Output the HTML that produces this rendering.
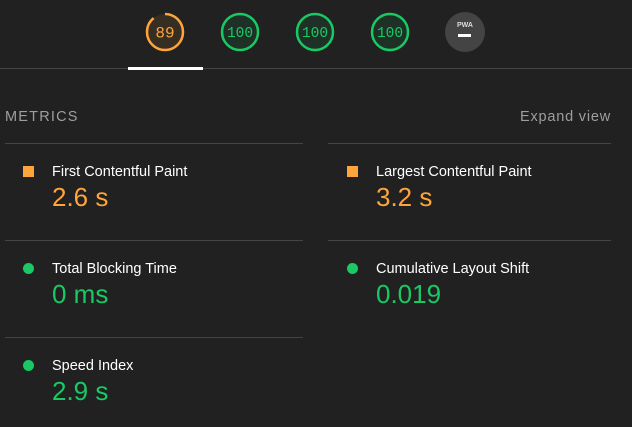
<!DOCTYPE html>
<html><head><style>
body{margin:0;width:632px;height:427px;background:#212121;font-family:"Liberation Sans",sans-serif;position:relative;overflow:hidden}
.g{position:absolute;top:12px}
.sep{position:absolute;left:0;top:68px;width:632px;height:1px;background:#444}
.tab{position:absolute;left:128px;top:67px;width:75px;height:3px;background:#fff}
.hdr{position:absolute;top:109px;font-size:14.5px;color:#9e9e9e}
.line{position:absolute;height:1px;background:#444}
.m{position:absolute}
.ic{position:absolute;left:0;top:2px;width:11px;height:11px}
.t{position:absolute;left:29px;top:0;font-size:14.5px;color:#fff;white-space:nowrap}
.v{position:absolute;left:29px;top:18px;font-size:26px;white-space:nowrap}
.o{color:#ffa43a}.gr{color:#18c964}
</style></head><body>
<svg class="g" style="left:145px" width="40" height="40" viewBox="0 0 40 40"><circle cx="20" cy="20" r="18" fill="#ffa43a" fill-opacity=".1"/><circle cx="20" cy="20" r="18" fill="none" stroke="#ffa43a" stroke-width="2.5" stroke-dasharray="100.6 113.1" transform="rotate(-90 20 20)"/><text x="20" y="25.5" text-anchor="middle" font-family="Liberation Mono" font-size="16" fill="#ffa43a">89</text></svg>
<svg class="g" style="left:220px" width="40" height="40" viewBox="0 0 40 40"><circle cx="20" cy="20" r="18" fill="#18c964" fill-opacity=".1" stroke="#18c964" stroke-width="2.5"/><text x="20" y="25" text-anchor="middle" font-family="Liberation Mono" font-size="14.5" fill="#18c964">100</text></svg>
<svg class="g" style="left:295px" width="40" height="40" viewBox="0 0 40 40"><circle cx="20" cy="20" r="18" fill="#18c964" fill-opacity=".1" stroke="#18c964" stroke-width="2.5"/><text x="20" y="25" text-anchor="middle" font-family="Liberation Mono" font-size="14.5" fill="#18c964">100</text></svg>
<svg class="g" style="left:370px" width="40" height="40" viewBox="0 0 40 40"><circle cx="20" cy="20" r="18" fill="#18c964" fill-opacity=".1" stroke="#18c964" stroke-width="2.5"/><text x="20" y="25" text-anchor="middle" font-family="Liberation Mono" font-size="14.5" fill="#18c964">100</text></svg>
<svg class="g" style="left:445px" width="40" height="40" viewBox="0 0 40 40"><circle cx="20" cy="20" r="20" fill="#444"/><text x="20" y="15" text-anchor="middle" font-size="7" font-weight="bold" fill="#ddd">PWA</text><rect x="13" y="22" width="13" height="3" fill="#fff"/></svg>
<div class="sep"></div><div class="tab"></div>
<div class="hdr" style="left:5px;letter-spacing:1.2px">METRICS</div>
<div class="hdr" style="right:21px;letter-spacing:.8px">Expand view</div>
<div class="line" style="left:5px;top:143px;width:298px"></div>
<div class="line" style="left:328px;top:143px;width:283px"></div>
<div class="line" style="left:5px;top:240px;width:298px"></div>
<div class="line" style="left:328px;top:240px;width:283px"></div>
<div class="line" style="left:5px;top:337px;width:298px"></div>
<div class="m" style="left:23px;top:164px"><div class="ic" style="background:#ffa43a"></div><div class="t">First Contentful Paint</div><div class="v o">2.6 s</div></div>
<div class="m" style="left:347px;top:164px"><div class="ic" style="background:#ffa43a"></div><div class="t">Largest Contentful Paint</div><div class="v o">3.2 s</div></div>
<div class="m" style="left:23px;top:261px"><div class="ic" style="background:#18c964;border-radius:50%"></div><div class="t">Total Blocking Time</div><div class="v gr">0 ms</div></div>
<div class="m" style="left:347px;top:261px"><div class="ic" style="background:#18c964;border-radius:50%"></div><div class="t">Cumulative Layout Shift</div><div class="v gr">0.019</div></div>
<div class="m" style="left:23px;top:358px"><div class="ic" style="background:#18c964;border-radius:50%"></div><div class="t">Speed Index</div><div class="v gr">2.9 s</div></div>
</body></html>
